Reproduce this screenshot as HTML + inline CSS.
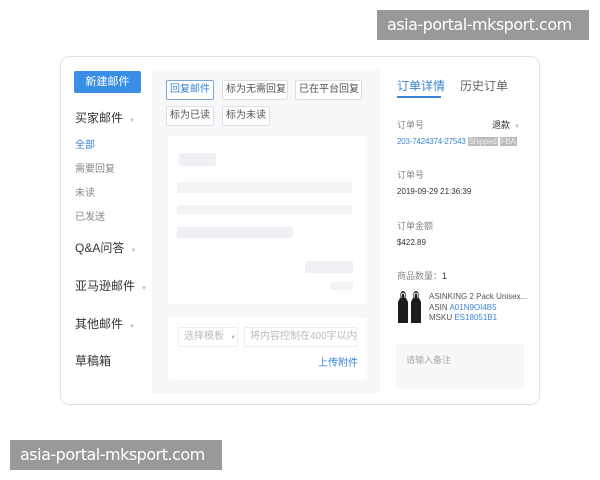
<!DOCTYPE html>
<html><head><meta charset="utf-8"><style>
*{margin:0;padding:0;box-sizing:border-box}
body{width:600px;height:480px;background:#fff;font-family:"Liberation Sans","Noto Sans CJK SC",sans-serif;position:relative;overflow:hidden;color:#333}
.a{position:absolute}
.card{left:60px;top:56px;width:480px;height:349px;border:1px solid #dfe3e8;border-radius:9px}
.wm{background:#999;color:#fff;font-size:16px;line-height:30px;padding-left:10px;font-family:"DejaVu Sans",sans-serif;letter-spacing:-0.5px}
.btn{border:1px solid #dcdfe6;border-radius:2px;font-size:10px;line-height:18px;height:20px;padding:0 3px;color:#555;background:#fff;white-space:nowrap}
.sk{background:#eef0f3;border-radius:2px}
.t{font-size:9px;color:#888}
.tri{color:#bbb;font-size:6px;margin-left:6px}
.blue{color:#3a84d6}
</style></head><body>
<div class="a wm" style="left:377px;top:10px;width:212px;height:30px">asia-portal-mksport.com</div>
<div class="a wm" style="left:10px;top:440px;width:212px;height:30px">asia-portal-mksport.com</div>
<div class="a card"></div>
<div class="a" style="left:74px;top:71px;width:67px;height:22px;background:#3a8ee6;border-radius:2px;color:#fff;font-size:11px;text-align:center;line-height:22px">新建邮件</div>
<div class="a" style="left:75px;top:109px;font-size:12px">买家邮件<span class="tri">▼</span></div>
<div class="a blue" style="left:75px;top:136px;font-size:10px">全部</div>
<div class="a t" style="left:75px;top:160px;font-size:10px">需要回复</div>
<div class="a t" style="left:75px;top:184px;font-size:10px">未读</div>
<div class="a t" style="left:75px;top:208px;font-size:10px">已发送</div>
<div class="a" style="left:75px;top:239px;font-size:12px">Q&amp;A问答<span class="tri">▼</span></div>
<div class="a" style="left:75px;top:277px;font-size:12px">亚马逊邮件<span class="tri">▼</span></div>
<div class="a" style="left:75px;top:315px;font-size:12px">其他邮件<span class="tri">▼</span></div>
<div class="a" style="left:75px;top:352px;font-size:12px">草稿箱</div>
<div class="a" style="left:152px;top:70px;width:228px;height:323px;background:#f7f8fa"></div>
<div class="a btn" style="left:166px;top:80px;width:48px;text-align:center;border-color:#7aa7dd;color:#3a84d6">回复邮件</div>
<div class="a btn" style="left:222px;top:80px;width:66px;text-align:center">标为无需回复</div>
<div class="a btn" style="left:295px;top:80px;width:67px;text-align:center">已在平台回复</div>
<div class="a btn" style="left:166px;top:106px;width:48px;text-align:center">标为已读</div>
<div class="a btn" style="left:222px;top:106px;width:48px;text-align:center">标为未读</div>
<div class="a" style="left:168px;top:136px;width:199px;height:168px;background:#fff;border-radius:3px"></div>
<div class="a sk" style="left:179px;top:153px;width:37px;height:13px"></div>
<div class="a sk" style="left:177px;top:182px;width:175px;height:11px;background:#f2f3f5"></div>
<div class="a sk" style="left:177px;top:205px;width:175px;height:9px;background:#f2f3f5"></div>
<div class="a sk" style="left:177px;top:227px;width:116px;height:11px"></div>
<div class="a sk" style="left:305px;top:261px;width:48px;height:12px"></div>
<div class="a sk" style="left:330px;top:282px;width:23px;height:8px;background:#f2f3f5"></div>
<div class="a" style="left:168px;top:317px;width:199px;height:63px;background:#fff;border-radius:3px"></div>
<div class="a" style="left:178px;top:327px;width:60px;height:20px;border:1px solid #eceef2;font-size:10px;color:#bbb;line-height:18px;padding-left:5px">选择模板<span class="tri">▼</span></div>
<div class="a" style="left:244px;top:327px;width:113px;height:20px;border:1px solid #eceef2;font-size:10px;color:#bbb;line-height:18px;padding-left:5px;white-space:nowrap;overflow:hidden">将内容控制在400字以内</div>
<div class="a blue" style="left:318px;top:354px;font-size:10px">上传附件</div>
<div class="a" style="left:397px;top:77px;font-size:12px;color:#3a84d6">订单详情</div>
<div class="a" style="left:460px;top:77px;font-size:12px;color:#666">历史订单</div>
<div class="a" style="left:397px;top:96px;width:44px;height:2px;background:#3a84d6"></div>
<div class="a t" style="left:397px;top:118px">订单号</div>
<div class="a" style="left:492px;top:118px;font-size:9px;color:#333">退款<span class="tri" style="margin-left:4px">▼</span></div>
<div class="a blue" style="left:397px;top:137px;font-size:8px;white-space:nowrap;letter-spacing:-0.2px">203-7424374-27543 <span style="background:#bbb;color:#eee;padding:0 1px">Shipped</span> <span style="background:#bbb;color:#eee;padding:0 1px">FBA</span></div>
<div class="a t" style="left:397px;top:168px">订单号</div>
<div class="a" style="left:397px;top:187px;font-size:8px">2019-09-29 21:36:39</div>
<div class="a t" style="left:397px;top:219px">订单金额</div>
<div class="a" style="left:397px;top:238px;font-size:8px">$422.89</div>
<div class="a t" style="left:397px;top:269px">商品数量：<span style="color:#333">1</span></div>
<svg class="a" style="left:397px;top:290px" width="26" height="34" viewBox="0 0 26 34"><g fill="#1c1c1c"><path d="M3 8 Q3 1 6 1 Q9 1 9 8 L11 12 L11 33 L1 33 L1 12 Z"/><path d="M16 8 Q16 1 19 1 Q22 1 22 8 L24 12 L24 33 L14 33 L14 12 Z"/></g><path d="M4 8 Q4 3 6 3 Q8 3 8 8 M17 8 Q17 3 19 3 Q21 3 21 8" fill="none" stroke="#fff" stroke-width="1"/></svg>
<div class="a" style="left:429px;top:292px;font-size:8px;color:#555;line-height:10.5px;white-space:nowrap">ASINKING 2 Pack Unisex...<br>ASIN <span class="blue">A01N9OI4B5</span><br>MSKU <span class="blue">ES18051B1</span></div>
<div class="a" style="left:396px;top:344px;width:128px;height:45px;background:#f7f8fa;border-radius:2px;font-size:9px;color:#aaa;padding:9px 10px">请输入备注</div>
</body></html>
